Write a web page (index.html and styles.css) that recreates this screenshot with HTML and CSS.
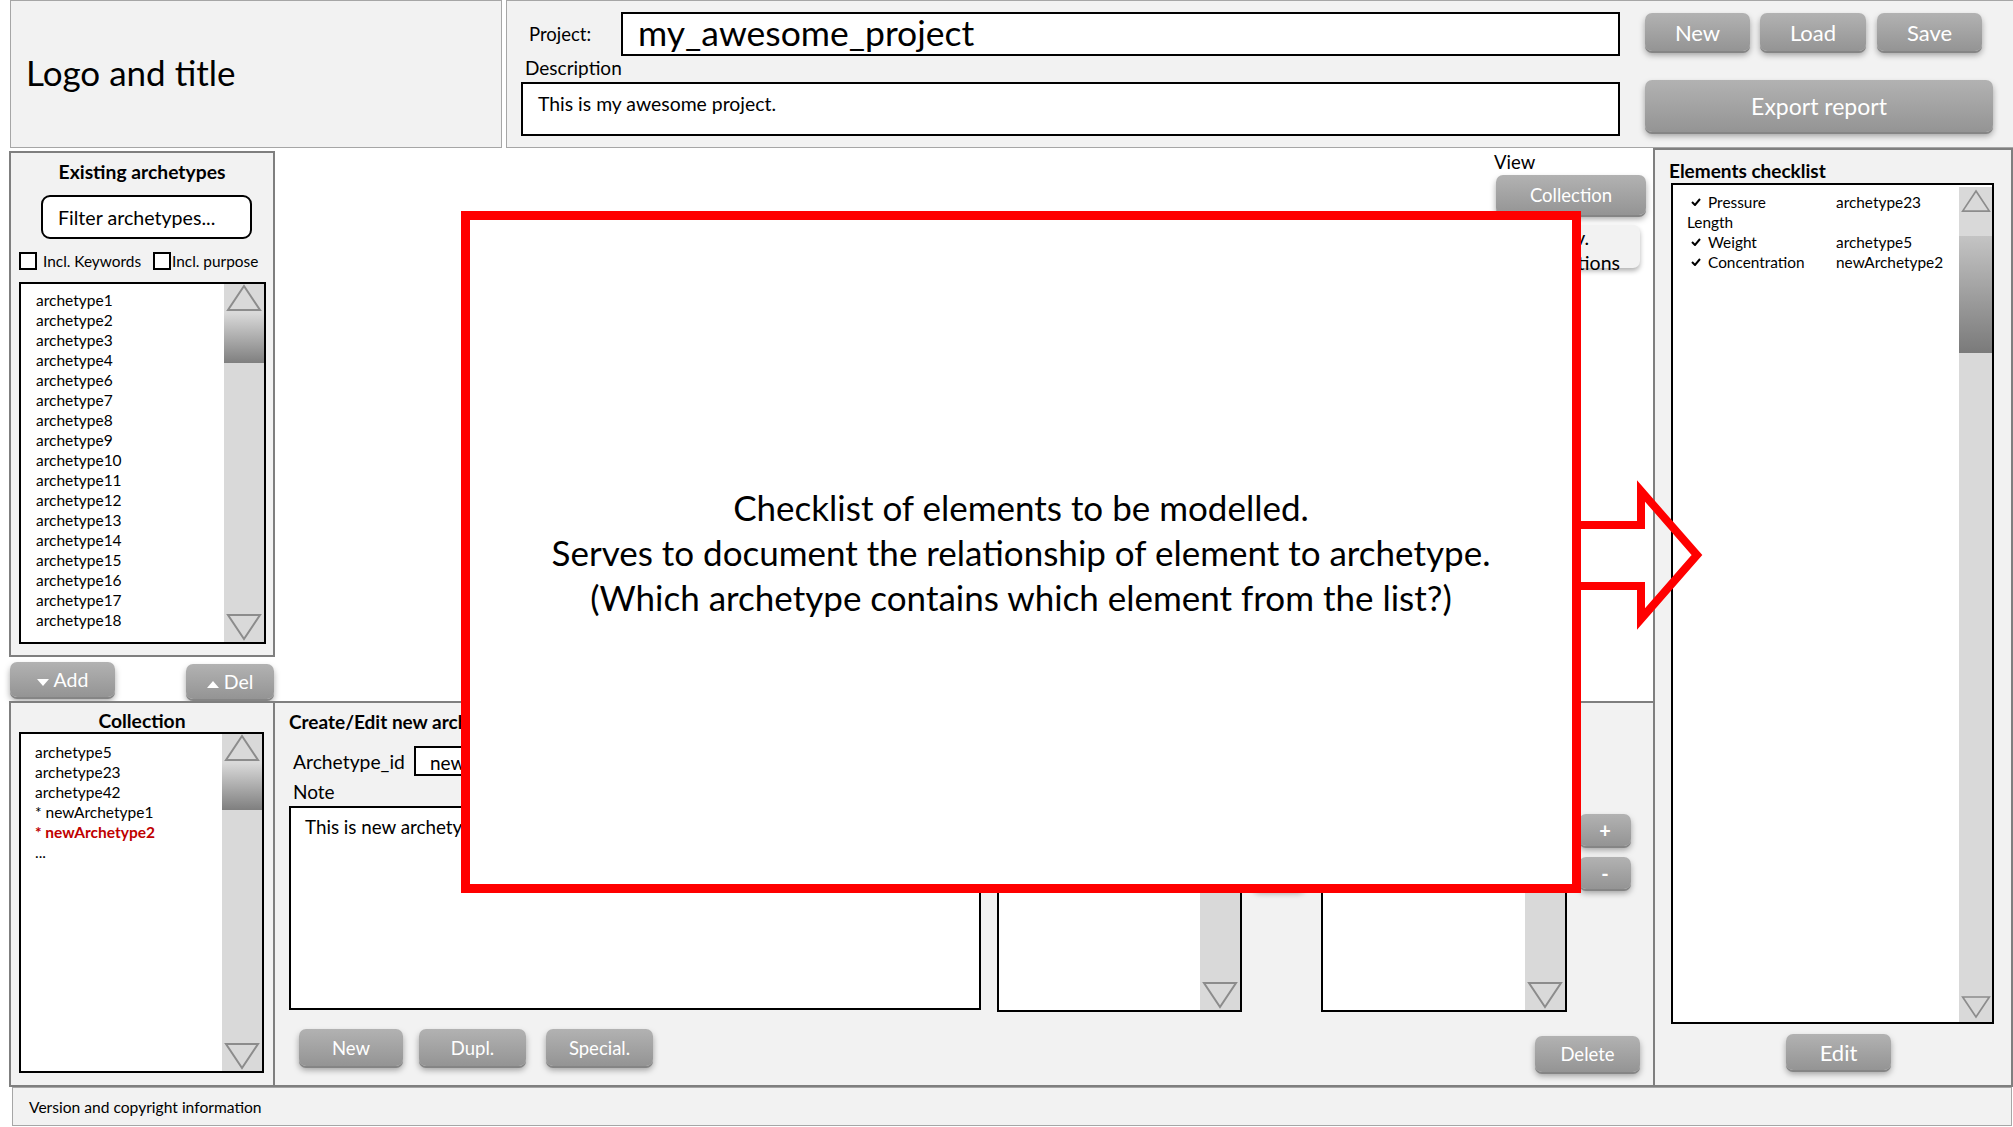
FILE: index.html
```html
<!DOCTYPE html>
<html lang="en">
<head>
  <meta charset="UTF-8" />
  <meta name="viewport" content="width=device-width, initial-scale=1.0"/>
  <title>Archetype collection editor</title>
  <link rel="stylesheet" href="styles.css">
</head>
<body>

  <header class="top">
    <div class="logo-box">Logo and title</div>
    <div class="project-box">
      <div class="project-fields">
        <div class="project-row">
          <span class="project-label">Project:</span>
          <div class="field project-name">my_awesome_project</div>
        </div>
        <div class="desc-label">Description</div>
        <div class="field project-desc">This is my awesome project.</div>
      </div>
      <div class="project-actions">
        <div class="file-buttons">
          <button class="btn btn-file">New</button>
          <button class="btn btn-file btn-load">Load</button>
          <button class="btn btn-file">Save</button>
        </div>
        <button class="btn btn-export">Export report</button>
      </div>
    </div>
  </header>

  <div class="main">

    <!-- left column: archetype repository + collection -->
    <div class="left-col">
      <div class="panel existing">
        <h3 class="panel-title">Existing archetypes</h3>
        <div class="filter">Filter archetypes...</div>
        <div class="checks">
          <label class="check check-kw"><span class="box"></span>Incl. Keywords</label>
          <label class="check check-purpose"><span class="box"></span>Incl. purpose</label>
        </div>
        <div class="list list-existing">
          <ul class="items">
            <li>archetype1</li>
            <li>archetype2</li>
            <li>archetype3</li>
            <li>archetype4</li>
            <li>archetype6</li>
            <li>archetype7</li>
            <li>archetype8</li>
            <li>archetype9</li>
            <li>archetype10</li>
            <li>archetype11</li>
            <li>archetype12</li>
            <li>archetype13</li>
            <li>archetype14</li>
            <li>archetype15</li>
            <li>archetype16</li>
            <li>archetype17</li>
            <li>archetype18</li>
          </ul>
          <div class="scrollbar">
            <svg class="sb-up" viewBox="0 0 36 29"><polygon points="18,2 34,26 2,26"/></svg>
            <div class="thumb"></div>
            <div class="track"></div>
            <svg class="sb-down" viewBox="0 0 36 30"><polygon points="2,3 34,3 18,27"/></svg>
          </div>
        </div>
      </div>

      <div class="move-row">
        <button class="btn btn-add"><span class="tri-down"></span>Add</button>
        <button class="btn btn-del"><span class="tri-up"></span>Del</button>
      </div>

      <div class="panel collection">
        <h3 class="panel-title">Collection</h3>
        <div class="list list-collection">
          <ul class="items">
            <li>archetype5</li>
            <li>archetype23</li>
            <li>archetype42</li>
            <li>* newArchetype1</li>
            <li class="current">* newArchetype2</li>
            <li>...</li>
          </ul>
          <div class="scrollbar">
            <svg class="sb-up" viewBox="0 0 36 29"><polygon points="18,2 34,26 2,26"/></svg>
            <div class="thumb"></div>
            <div class="track"></div>
            <svg class="sb-down" viewBox="0 0 36 30"><polygon points="2,3 34,3 18,27"/></svg>
          </div>
        </div>
      </div>
    </div>

    <!-- center column: view + editor -->
    <div class="center-col">
      <div class="view-area">
        <div class="view-switch">
          <span class="view-label">View</span>
          <button class="btn btn-view">Collection</button>
          <button class="btn-light">Prev.<br>descriptions</button>
        </div>
      </div>

      <div class="edit-panel">
        <h3 class="edit-title">Create/Edit new archetype</h3>
        <div class="edit-body">
          <div class="edit-form">
            <div class="id-row">
              <span class="id-label">Archetype_id</span>
              <div class="field id-input">newArchetype2</div>
            </div>
            <div class="note-label">Note</div>
            <div class="field note-area">This is new archetype number two.</div>
          </div>
          <div class="list list-small list-elements">
            <ul class="items"></ul>
            <div class="scrollbar">
              <div class="track"></div>
              <svg class="sb-down" viewBox="0 0 36 30"><polygon points="2,3 34,3 18,27"/></svg>
            </div>
          </div>
          <div class="side-buttons mid-buttons">
            <button class="btn btn-small">&gt;</button>
            <button class="btn btn-small">&lt;</button>
          </div>
          <div class="list list-small list-keywords">
            <ul class="items"></ul>
            <div class="scrollbar">
              <div class="track"></div>
              <svg class="sb-down" viewBox="0 0 36 30"><polygon points="2,3 34,3 18,27"/></svg>
            </div>
          </div>
          <div class="side-buttons">
            <button class="btn btn-small">+</button>
            <button class="btn btn-small">-</button>
          </div>
        </div>
        <div class="edit-actions">
          <button class="btn btn-act btn-new">New</button>
          <button class="btn btn-act btn-dupl">Dupl.</button>
          <button class="btn btn-act btn-special">Special.</button>
          <button class="btn btn-act btn-delete">Delete</button>
        </div>
      </div>
    </div>

    <!-- right column: elements checklist -->
    <div class="right-col">
      <h3 class="checklist-title">Elements checklist</h3>
      <div class="list list-checklist">
        <div class="check-items">
          <span class="elem"><svg class="tick" viewBox="0 0 10 8"><polyline points="1,4 4,7 9,1"/></svg>Pressure</span><span>archetype23</span>
          <span class="elem plain">Length</span><span></span>
          <span class="elem"><svg class="tick" viewBox="0 0 10 8"><polyline points="1,4 4,7 9,1"/></svg>Weight</span><span>archetype5</span>
          <span class="elem"><svg class="tick" viewBox="0 0 10 8"><polyline points="1,4 4,7 9,1"/></svg>Concentration</span><span>newArchetype2</span>
        </div>
        <div class="scrollbar">
          <svg class="sb-up" viewBox="0 0 36 29"><polygon points="18,2 34,26 2,26"/></svg>
          <div class="gap"></div>
          <div class="thumb"></div>
          <div class="track"></div>
          <svg class="sb-down" viewBox="0 0 36 30"><polygon points="2,3 34,3 18,27"/></svg>
        </div>
      </div>
      <button class="btn btn-edit">Edit</button>
    </div>
  </div>

  <footer class="footer">Version and copyright information</footer>

  <!-- annotation laid over the mockup -->
  <div class="note-overlay">
    <p>Checklist of elements to be modelled.<br>
    Serves to document the relationship of element to archetype.<br>
    (Which archetype contains which element from the list?)</p>
  </div>
  <svg class="note-arrow" viewBox="0 0 145 155">
    <polygon points="6,47 71,47 71,13 127,77 71,141 71,108 6,108"/>
  </svg>

</body>
</html>
```

FILE: styles.css
```css
* {
  box-sizing: border-box;
}

body {
  margin: 0;
  width: 2013px;
  height: 1127px;
  position: relative;
  overflow: hidden;
  font-family: Lato, "Liberation Sans", sans-serif;
  color: #000;
  background-color: #fff;
}

button {
  font-family: inherit;
}

/* header */
.top {
  display: flex;
  height: 148px;
}

.logo-box {
  margin-left: 10px;
  width: 492px;
  border: 1px solid #a6a6a6;
  background-color: #f2f2f2;
  display: flex;
  align-items: center;
  padding: 0 0 5px 15px;
  font-size: 35px;
}

.project-box {
  flex: 1;
  margin-left: 4px;
  border: 1px solid #a6a6a6;
  border-right: none;
  background-color: #f2f2f2;
  display: flex;
  padding: 11px 0 0 14px;
}

.project-fields {
  width: 1099px;
}

.project-row {
  display: flex;
  align-items: center;
}

.project-label {
  width: 100px;
  padding-left: 8px;
  font-size: 18.5px;
}

.field {
  background-color: #fff;
  border: 2px solid #000;
}

.project-name {
  width: 999px;
  height: 44px;
  padding-left: 15px;
  font-size: 35.5px;
  line-height: 38px;
}

.desc-label {
  margin: 2px 0 0 4px;
  font-size: 19px;
  line-height: 20px;
}

.project-desc {
  margin-top: 4px;
  height: 54px;
  padding: 8px 15px;
  font-size: 19.4px;
}

.project-actions {
  margin-left: 25px;
  padding-top: 1px;
}

.file-buttons {
  display: flex;
  gap: 10px;
}

/* buttons */
.btn {
  border: none;
  padding: 0;
  border-radius: 7px;
  background: linear-gradient(#b2b2b2, #949494);
  box-shadow: 0 2px 0 #858585, 0 4px 6px rgba(0, 0, 0, 0.35);
  color: #fff;
}

.btn-file {
  width: 105px;
  height: 38px;
  font-size: 22px;
}

.btn-load {
  width: 106px;
  margin-right: 1px;
}

.btn-export {
  margin-top: 29px;
  width: 348px;
  height: 52px;
  font-size: 23px;
}

/* main */
.main {
  display: flex;
  height: 939px;
}

.left-col {
  width: 275px;
  padding: 3px 0 0 9px;
  display: flex;
  flex-direction: column;
}

.panel {
  border: 2px solid #7f7f7f;
  background-color: #f2f2f2;
  padding-top: 7px;
}

.panel-title {
  margin: 0;
  font-size: 19.3px;
  font-weight: bold;
  line-height: 24px;
  text-align: center;
}

.existing {
  height: 506px;
}

.filter {
  margin: 11px 0 0 30px;
  width: 211px;
  height: 44px;
  border: 2px solid #000;
  border-radius: 9px;
  background-color: #fff;
  display: flex;
  align-items: center;
  padding-left: 15px;
  font-size: 19.6px;
}

.checks {
  margin-top: 12px;
  padding-left: 8px;
  display: flex;
  line-height: 20px;
  font-size: 15.4px;
}

.check {
  display: flex;
  align-items: center;
}

.check-kw {
  width: 134px;
}

.box {
  width: 18px;
  height: 18px;
  border: 2px solid #000;
  background-color: #fff;
  margin-right: 6px;
}

.check-purpose .box {
  margin-right: 1px;
}

/* list boxes */
.list {
  display: flex;
  border: 2px solid #000;
  background-color: #fff;
}

.items {
  flex: 1;
  list-style: none;
  margin: 0;
  padding: 6px 0 0 15px;
  font-size: 15.5px;
  line-height: 20px;
}

.scrollbar {
  width: 40px;
  background-color: #d9d9d9;
  display: flex;
  flex-direction: column;
  align-items: center;
}

.scrollbar svg {
  width: 36px;
  flex-shrink: 0;
}

.sb-up {
  height: 29px;
}

.sb-down {
  height: 30px;
}

.scrollbar polygon {
  fill: none;
  stroke: #8c8c8c;
  stroke-width: 2;
}

.thumb {
  align-self: stretch;
  height: 50px;
  background: linear-gradient(#d9d9d9, #7f7f7f);
}

.track {
  flex: 1;
}

.list-existing {
  margin: 11px 0 0 8px;
  width: 247px;
  height: 362px;
}

.move-row {
  height: 44px;
  display: flex;
  align-items: flex-start;
}

.btn-add {
  margin: 5px 0 0 1px;
  width: 105px;
  height: 35px;
  font-size: 19.5px;
}

.btn-del {
  margin: 7px 1px 0 auto;
  width: 88px;
  height: 35px;
  font-size: 19.5px;
}

.tri-down,
.tri-up {
  display: inline-block;
  margin-right: 5px;
  vertical-align: middle;
  border-left: 6px solid transparent;
  border-right: 6px solid transparent;
}

.tri-down {
  border-top: 7px solid #fff;
}

.tri-up {
  border-bottom: 7px solid #fff;
}

.collection {
  height: 386px;
}

.collection .panel-title {
  line-height: 22px;
}

.list-collection {
  margin-left: 8px;
  width: 245px;
  height: 341px;
}

.list-collection .items {
  padding: 8px 0 0 14px;
}

.list-collection .thumb {
  height: 47px;
}

.current {
  color: #c00000;
  font-weight: bold;
}

/* center column */
.center-col {
  width: 1378px;
  display: flex;
  flex-direction: column;
}

.view-area {
  flex: 1;
  display: flex;
  justify-content: flex-end;
  padding: 4px 7px 0 0;
}

.view-switch {
  width: 150px;
  display: flex;
  flex-direction: column;
  align-items: flex-start;
}

.view-label {
  margin-left: -2px;
  font-size: 18.5px;
  line-height: 20px;
}

.btn-view {
  margin-top: 3px;
  width: 150px;
  height: 40px;
  font-size: 18.5px;
}

.btn-light {
  margin-top: 10px;
  width: 144px;
  height: 43px;
  padding: 0;
  border: none;
  border-radius: 7px;
  background-color: #f2f2f2;
  box-shadow: 0 3px 5px rgba(0, 0, 0, 0.3);
  font-size: 19.5px;
  line-height: 25px;
}

.edit-panel {
  height: 386px;
  border-top: 2px solid #7f7f7f;
  border-bottom: 2px solid #7f7f7f;
  background-color: #f2f2f2;
  padding: 7px 0 0 14px;
}

.edit-title {
  margin: 0;
  font-size: 19px;
  font-weight: bold;
  line-height: 24px;
}

.edit-body {
  margin-top: 12px;
  display: flex;
  align-items: flex-start;
}

.edit-form {
  width: 692px;
}

.id-row {
  display: flex;
  align-items: center;
}

.id-label {
  width: 125px;
  padding-left: 4px;
  font-size: 19.3px;
}

.id-input {
  width: 340px;
  height: 30px;
  padding: 3px 0 0 14px;
  font-size: 19px;
}

.note-label {
  margin-top: 6px;
  padding-left: 4px;
  font-size: 19px;
  line-height: 20px;
}

.note-area {
  margin-top: 4px;
  height: 204px;
  padding: 7px 14px;
  font-size: 18.8px;
}

.list-small {
  margin-top: 60px;
  height: 206px;
}

.list-elements {
  margin-left: 16px;
  width: 245px;
}

.list-keywords {
  margin-left: 16px;
  width: 246px;
}

.side-buttons {
  margin: 68px 0 0 12px;
  width: 52px;
  display: flex;
  flex-direction: column;
  gap: 11px;
}

.mid-buttons {
  margin-left: 11px;
}

.btn-small {
  height: 32px;
  font-size: 20px;
  font-weight: bold;
}

.edit-actions {
  margin-top: 17px;
  display: flex;
  align-items: flex-start;
}

.btn-act {
  height: 37px;
  font-size: 18.5px;
}

.btn-new {
  margin-left: 10px;
  width: 104px;
}

.btn-dupl {
  margin-left: 16px;
  width: 107px;
}

.btn-special {
  margin-left: 20px;
  width: 107px;
}

.btn-delete {
  margin: 7px 13px 0 auto;
  width: 105px;
  height: 36px;
}

/* right column */
.right-col {
  width: 360px;
  border: 2px solid #7f7f7f;
  background-color: #f2f2f2;
  padding: 10px 0 0 14px;
  display: flex;
  flex-direction: column;
}

.checklist-title {
  margin: 0;
  font-size: 19px;
  font-weight: bold;
  line-height: 22px;
}

.list-checklist {
  margin: 1px 0 0 2px;
  width: 323px;
  height: 841px;
}

.check-items {
  flex: 1;
  align-self: flex-start;
  display: grid;
  grid-template-columns: 149px auto;
  padding: 7px 0 0 14px;
  font-size: 15.4px;
  line-height: 20px;
}

.elem {
  padding-left: 4px;
  display: flex;
  align-items: center;
}

.elem.plain {
  padding-left: 0;
}

.tick {
  width: 10px;
  height: 8px;
  margin-right: 7px;
}

.tick polyline {
  fill: none;
  stroke: #000;
  stroke-width: 2;
}

.list-checklist .scrollbar {
  width: 33px;
  margin-top: 2px;
}

.list-checklist .scrollbar svg {
  width: 30px;
}

.list-checklist .gap {
  height: 20px;
}

.list-checklist .thumb {
  height: 117px;
  background: linear-gradient(#c4c4c4, #7a7a7a);
}

.btn-edit {
  margin: 10px 0 0 117px;
  width: 105px;
  height: 36px;
  font-size: 22px;
}

/* footer */
.footer {
  margin-left: 12px;
  width: 2000px;
  height: 39px;
  border: 1px solid #a6a6a6;
  background-color: #f2f2f2;
  display: flex;
  align-items: center;
  padding-left: 16px;
  font-size: 15.6px;
}

/* annotation */
.note-overlay {
  position: absolute;
  left: 461px;
  top: 211px;
  width: 1120px;
  height: 682px;
  border: 9px solid #ff0000;
  background-color: #fff;
  display: flex;
  align-items: center;
  justify-content: center;
  z-index: 10;
}

.note-overlay p {
  margin: 0;
  text-align: center;
  font-size: 35px;
  line-height: 45px;
}

.note-arrow {
  position: absolute;
  left: 1570px;
  top: 478px;
  width: 145px;
  height: 155px;
  z-index: 11;
}

.note-arrow polygon {
  fill: none;
  stroke: #ff0000;
  stroke-width: 8;
  stroke-miterlimit: 10;
}
```
